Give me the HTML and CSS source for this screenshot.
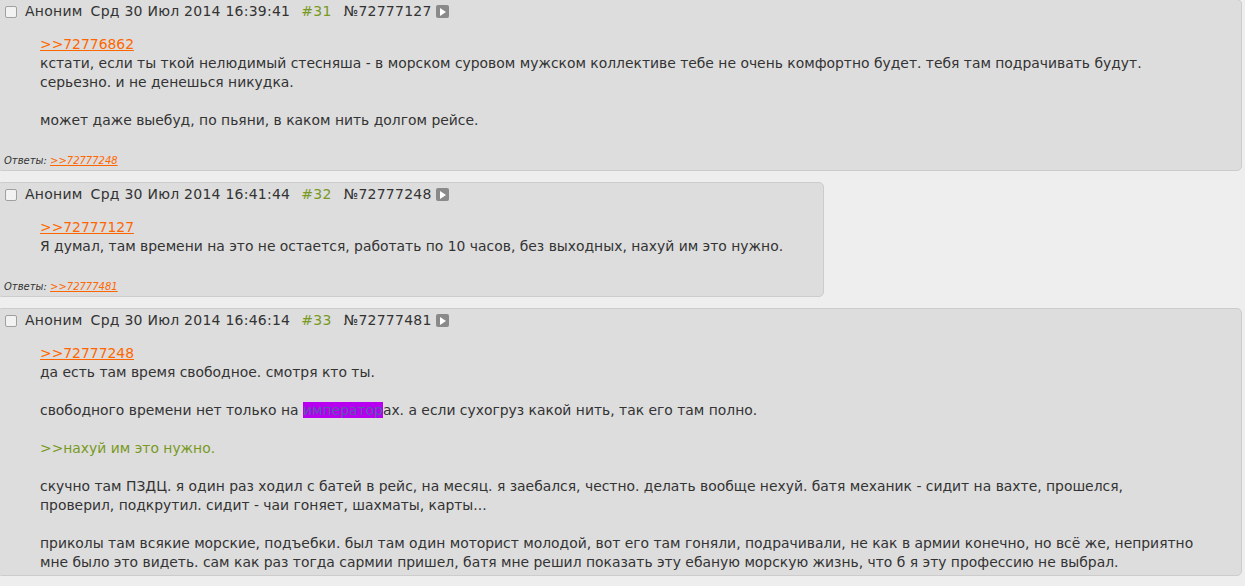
FILE: index.html
```html
<!DOCTYPE html>
<html lang="ru">
<head>
  <meta charset="UTF-8" />
  <meta name="viewport" content="width=device-width, initial-scale=1.0" />
  <title>Тред</title>
  <link rel="stylesheet" href="styles.css">
</head>
<body>
  <div class="thread">

    <div class="post">
      <div class="post-head">
        <span class="check"></span>
        <span class="name">Аноним</span>
        <span class="date">Срд 30 Июл 2014 16:39:41</span>
        <span class="num">#31</span>
        <span class="id">№72777127</span>
        <span class="play"></span>
      </div>
      <div class="post-body">
        <a href="#" class="reply">&gt;&gt;72776862</a><br>
        кстати, если ты ткой нелюдимый стесняша - в морском суровом мужском коллективе тебе не очень комфортно будет. тебя там подрачивать будут. серьезно. и не денешься никудка.<br>
        <br>
        может даже выебуд, по пьяни, в каком нить долгом рейсе.
      </div>
      <div class="answers">Ответы: <a href="#" class="reply">&gt;&gt;72777248</a></div>
    </div>

    <div class="post">
      <div class="post-head">
        <span class="check"></span>
        <span class="name">Аноним</span>
        <span class="date">Срд 30 Июл 2014 16:41:44</span>
        <span class="num">#32</span>
        <span class="id">№72777248</span>
        <span class="play"></span>
      </div>
      <div class="post-body">
        <a href="#" class="reply">&gt;&gt;72777127</a><br>
        Я думал, там времени на это не остается, работать по 10 часов, без выходных, нахуй им это нужно.
      </div>
      <div class="answers">Ответы: <a href="#" class="reply">&gt;&gt;72777481</a></div>
    </div>

    <div class="post">
      <div class="post-head">
        <span class="check"></span>
        <span class="name">Аноним</span>
        <span class="date">Срд 30 Июл 2014 16:46:14</span>
        <span class="num">#33</span>
        <span class="id">№72777481</span>
        <span class="play"></span>
      </div>
      <div class="post-body">
        <a href="#" class="reply">&gt;&gt;72777248</a><br>
        да есть там время свободное. смотря кто ты.<br>
        <br>
        свободного времени нет только на <span class="mark">император</span>ах. а если сухогруз какой нить, так его там полно.<br>
        <br>
        <span class="quote">&gt;&gt;нахуй им это нужно.</span><br>
        <br>
        скучно там ПЗДЦ. я один раз ходил с батей в рейс, на месяц. я заебался, честно. делать вообще нехуй. батя механик - сидит на вахте, прошелся, проверил, подкрутил. сидит - чаи гоняет, шахматы, карты...<br>
        <br>
        приколы там всякие морские, подъебки. был там один моторист молодой, вот его там гоняли, подрачивали, не как в армии конечно, но всё же, неприятно мне было это видеть. сам как раз тогда сармии пришел, батя мне решил показать эту ебаную морскую жизнь, что б я эту профессию не выбрал.
      </div>
    </div>

  </div>
</body>
</html>
```

FILE: styles.css
```css
body {
  background-color: #eeeeee;
  color: #333333;
  font-family: "DejaVu Sans", Verdana, sans-serif;
  font-size: 13.9px;
  line-height: 19px;
  margin: 0;
  overflow: hidden;
}
.thread {
  display: flex;
  flex-direction: column;
  align-items: flex-start;
  gap: 11px;
  margin: -1px 0 0 -3px;
}
.post {
  box-sizing: border-box;
  max-width: 1245px;
  background-color: #dddddd;
  border: 1px solid #cccccc;
  border-radius: 5px;
  padding: 2px 0 3px 0;
}
.post-head {
  display: flex;
  align-items: center;
  height: 19px;
  padding-left: 7px;
  font-size: 14px;
  letter-spacing: 0.25px;
}
.check {
  width: 10px;
  height: 10px;
  border: 1px solid #a0a0a0;
  border-radius: 2px;
  background-color: #f2f2f2;
  margin-right: 8px;
}
.name {
  margin-right: 8px;
}
.num {
  color: #789922;
  margin-left: 11px;
}
.id {
  margin-left: 12px;
}
.play {
  position: relative;
  width: 13px;
  height: 13px;
  border-radius: 2px;
  background-color: #8a8a8a;
  margin-left: 4px;
}
.play::after {
  content: "";
  position: absolute;
  left: 4px;
  top: 3px;
  border-left: 6px solid #ffffff;
  border-top: 4px solid transparent;
  border-bottom: 4px solid transparent;
}
.post-body {
  margin: 14px 40px 0 42px;
}
.reply {
  color: #ff6600;
  text-decoration: underline;
}
.mark {
  background-color: #b800f0;
  color: #5858b0;
}
.quote {
  color: #789922;
}
.answers {
  margin: 25px 0 0 6px;
  font-size: 10px;
  line-height: 12px;
  font-style: italic;
}
```
